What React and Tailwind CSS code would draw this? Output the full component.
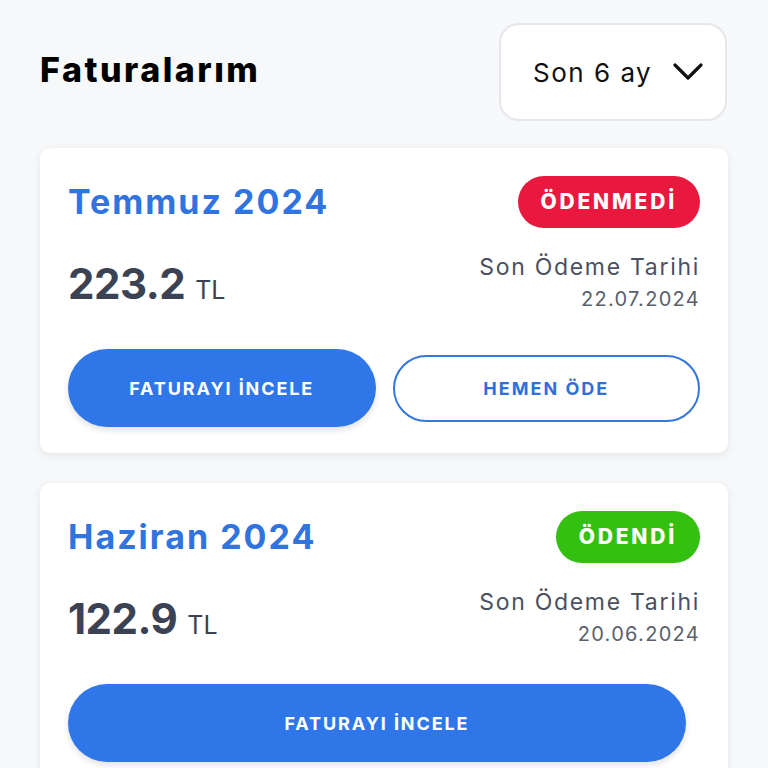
import React from "react";

const font = { fontFamily: '"Inter", "Open Sans", "Liberation Sans", sans-serif' };

function Card({ month, status, paid, amount, date, single }) {
  return (
    <div className="bg-white rounded-[10px] shadow-[0_2px_8px_rgba(0,0,0,0.08)] px-[28px] pt-[28px] pb-[26px]">
      <div className="flex items-center justify-between h-[52px]">
        <div className="text-[34px] font-bold text-[#2f74df] tracking-[2px] leading-none">{month}</div>
        <div
          className={`h-[52px] rounded-full flex items-center justify-center px-[23px] text-white text-[21px] font-extrabold tracking-[2.8px] ${
            paid ? "bg-[#34c010]" : "bg-[#e9183e]"
          }`}
        >
          {status}
        </div>
      </div>
      <div className="flex items-start justify-between mt-[29px]">
        <div className="flex items-baseline gap-[10px] mt-[6px]">
          <span className="text-[42px] font-bold text-[#3a4254] leading-none tracking-[-0.5px]">{amount}</span>
          <span className="text-[25px] text-[#3a4254] leading-none">TL</span>
        </div>
        <div className="text-right">
          <div className="text-[23px] text-[#4a5062] leading-[30px] tracking-[1.7px] mt-[-5px]">Son Ödeme Tarihi</div>
          <div className="text-[20px] text-[#5a5f6c] leading-[30px] tracking-[1.3px] mt-[2px]">{date}</div>
        </div>
      </div>
      <div className="flex items-center gap-[17px] mt-[35px]">
        <button
          className={`h-[78px] rounded-full bg-[#2f77e8] text-white text-[18px] font-bold tracking-[1.9px] shadow-[0_3px_6px_rgba(0,0,0,0.12)] ${
            single ? "w-[618px]" : "w-[308px]"
          }`}
        >
          FATURAYI İNCELE
        </button>
        {!single && (
          <button className="h-[67px] w-[308px] rounded-full border-2 border-[#3577e0] bg-white text-[#2f6fdb] text-[18px] font-bold tracking-[2px]">
            HEMEN ÖDE
          </button>
        )}
      </div>
    </div>
  );
}

export default function App() {
  return (
    <div className="w-[768px] h-[768px] overflow-hidden bg-[#f7f8fa]" style={font}>
      <div className="px-[40px] pt-[23px]">
        <div className="flex items-center justify-between pr-[1px]">
          <h1 className="text-[34px] font-extrabold text-black tracking-[2.5px] mt-[-6px]">Faturalarım</h1>
          <div className="w-[228px] h-[98px] bg-white border-2 border-[#e6e7ea] rounded-[20px] flex items-center justify-between pl-[32px] pr-[22px]">
            <span className="text-[26px] text-[#111] font-normal tracking-[1.5px]">Son 6 ay</span>
            <svg width="30" height="20" viewBox="0 0 30 20" fill="none">
              <path d="M2 3 L15 16 L28 3" stroke="#111" strokeWidth="3.2" strokeLinecap="round" strokeLinejoin="round" />
            </svg>
          </div>
        </div>
        <div className="flex flex-col gap-[30px] mt-[27px]">
          <Card month="Temmuz 2024" status="ÖDENMEDİ" amount="223.2" date="22.07.2024" />
          <Card month="Haziran 2024" status="ÖDENDİ" paid amount="122.9" date="20.06.2024" single />
        </div>
      </div>
    </div>
  );
}
